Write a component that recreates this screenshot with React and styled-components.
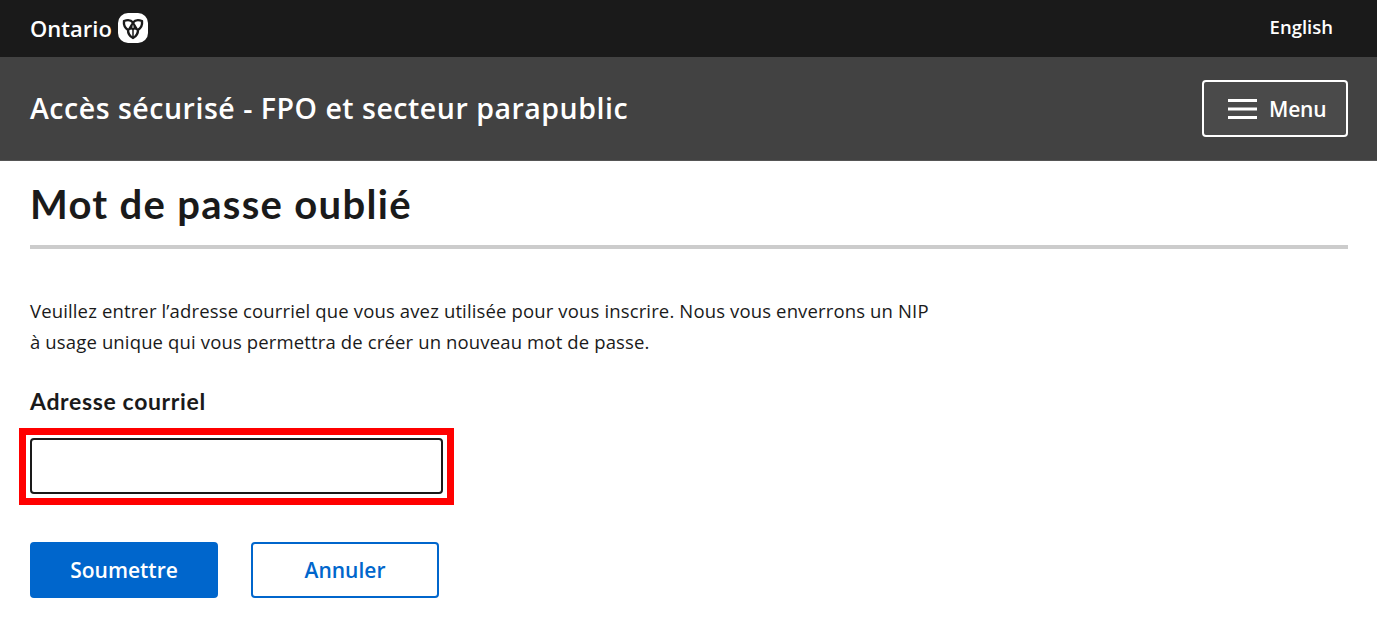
import React from 'react'
import styled, { createGlobalStyle } from 'styled-components'

const GlobalStyle = createGlobalStyle`
    html, body {
        margin: 0;
        padding: 0;
        background: #fff;
    }
    body {
        font-family: "Open Sans", "Liberation Sans", sans-serif;
        color: #1a1a1a;
    }
`;

const TopBar = styled.div`
    display: flex;
    align-items: center;
    justify-content: space-between;
    height: 57px;
    padding: 0 44px 1px 30px;
    box-sizing: border-box;
    background: #1a1a1a;
    color: #fff;
`;

const Brand = styled.div`
    display: flex;
    align-items: center;
    gap: 6px;
    font-family: "Open Sans", sans-serif;
    font-size: 22px;
    font-weight: 600;
`;

const LangLink = styled.a`
    margin-top: -4px;
    font-size: 18.5px;
    font-weight: 600;
`;

const SubHeader = styled.div`
    display: flex;
    align-items: center;
    justify-content: space-between;
    height: 104px;
    padding: 0 29px 0 30px;
    box-sizing: border-box;
    background: #424242;
    border-bottom: 1px solid #555;
    color: #fff;
`;

const SiteTitle = styled.div`
    margin-top: -2px;
    font-family: "Open Sans", sans-serif;
    font-size: 28.5px;
    font-weight: 600;
    letter-spacing: 0.52px;
`;

const MenuButton = styled.button`
    display: flex;
    align-items: center;
    gap: 12px;
    width: 146px;
    height: 57px;
    padding: 0 0 0 24px;
    box-sizing: border-box;
    background: #4a4a4a;
    border: 2px solid #fff;
    border-radius: 4px;
    color: #fff;
    font-family: "Open Sans", sans-serif;
    font-size: 21px;
    font-weight: 600;
    letter-spacing: -0.2px;
`;

const Main = styled.main`
    padding: 0 29px 0 30px;
`;

const PageTitle = styled.h1`
    margin: 0;
    padding: 19px 0 17px;
    border-bottom: 4px solid #ccc;
    font-family: Lato, "Open Sans", sans-serif;
    font-size: 40px;
    line-height: 48px;
    font-weight: 700;
    letter-spacing: 1.3px;
    color: #1a1a1a;
`;

const Intro = styled.p`
    width: 910px;
    margin: 46px 0 0;
    font-size: 18.5px;
    line-height: 31px;
    letter-spacing: 0.14px;
    color: #1a1a1a;
`;

const Label = styled.label`
    display: block;
    margin-top: 29px;
    font-family: Lato, "Open Sans", sans-serif;
    font-size: 23px;
    line-height: 30px;
    font-weight: 700;
    letter-spacing: 0.65px;
`;

const FieldHighlight = styled.div`
    width: 435px;
    height: 77px;
    margin: 12px 0 0 -11px;
    padding: 3px 4px 4px;
    box-sizing: border-box;
    border: 7px solid #f00;
`;

const EmailInput = styled.input`
    display: block;
    width: 413px;
    height: 56px;
    box-sizing: border-box;
    border: 2px solid #1a1a1a;
    border-radius: 4px;
    background: #fff;
`;

const Actions = styled.div`
    display: flex;
    gap: 33px;
    margin-top: 37px;
`;

const ActionButton = styled.button`
    width: 188px;
    height: 56px;
    box-sizing: border-box;
    border: 2px solid #0066cc;
    border-radius: 4px;
    background: ${({ $primary }) => ($primary ? '#0066cc' : '#fff')};
    color: ${({ $primary }) => ($primary ? '#fff' : '#0066cc')};
    font-family: "Open Sans", sans-serif;
    font-size: 21px;
    font-weight: 600;
`;

const OntarioMark = () => (
    <svg width="30" height="30" viewBox="0 0 30 30" aria-hidden="true">
        <rect width="30" height="30" rx="10" fill="#fff" />
        <path
            d="M6 8C10 6.5 13 7 15 9.5C17 7 20 6.5 24 8C24.5 12 23 15 20 17C20 20.5 18 23.5 15 25C12 23.5 10 20.5 10 17C7 15 5.5 12 6 8Z"
            fill="#fff"
            stroke="#1a1a1a"
            strokeWidth="2.4"
            strokeLinejoin="round"
        />
        <path
            d="M15 9.5C14 11.5 13.6 13.2 13.4 15.5L10 17C11.5 15.5 12.5 12.5 15 9.5ZM15 9.5C16 11.5 16.4 13.2 16.6 15.5L20 17C18.5 15.5 17.5 12.5 15 9.5ZM13.4 15.5L15 17L16.6 15.5ZM15 16V24.5"
            fill="#1a1a1a"
            stroke="#1a1a1a"
            strokeWidth="1.5"
            strokeLinejoin="round"
        />
    </svg>
);

const MenuIcon = () => (
    <svg width="29" height="20" viewBox="0 0 29 20" aria-hidden="true">
        <path d="M0 1.5H29M0 10H29M0 18.5H29" stroke="#fff" strokeWidth="3" />
    </svg>
);

const App = () => (
    <>
        <GlobalStyle />
        <TopBar>
            <Brand>Ontario <OntarioMark /></Brand>
            <LangLink>English</LangLink>
        </TopBar>
        <SubHeader>
            <SiteTitle>Accès sécurisé - FPO et secteur parapublic</SiteTitle>
            <MenuButton><MenuIcon />Menu</MenuButton>
        </SubHeader>
        <Main>
            <PageTitle>Mot de passe oublié</PageTitle>
            <Intro>
                Veuillez entrer l’adresse courriel que vous avez utilisée pour vous inscrire. Nous vous enverrons un NIP à usage unique qui vous permettra de créer un nouveau mot de passe.
            </Intro>
            <Label htmlFor="email">Adresse courriel</Label>
            <FieldHighlight>
                <EmailInput id="email" type="email" />
            </FieldHighlight>
            <Actions>
                <ActionButton $primary>Soumettre</ActionButton>
                <ActionButton>Annuler</ActionButton>
            </Actions>
        </Main>
    </>
)

export default App
